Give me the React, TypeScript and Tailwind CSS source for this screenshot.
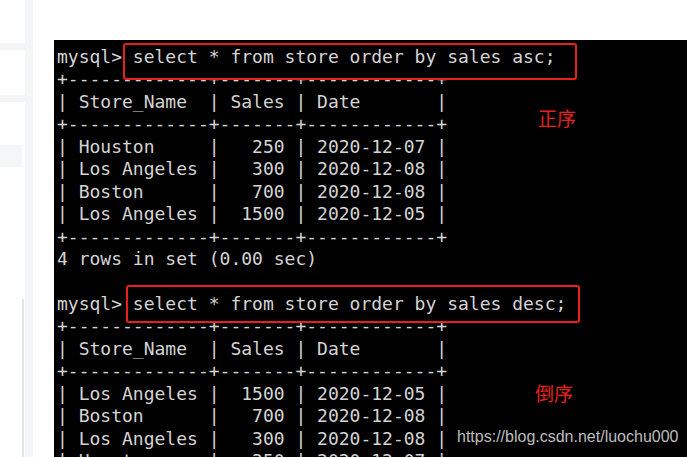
import React from "react";

const lines1 = [
  "mysql> select * from store order by sales asc;",
  "+-------------+-------+------------+",
  "| Store_Name  | Sales | Date       |",
  "+-------------+-------+------------+",
  "| Houston     |   250 | 2020-12-07 |",
  "| Los Angeles |   300 | 2020-12-08 |",
  "| Boston      |   700 | 2020-12-08 |",
  "| Los Angeles |  1500 | 2020-12-05 |",
  "+-------------+-------+------------+",
  "4 rows in set (0.00 sec)",
  " ",
  "mysql> select * from store order by sales desc;",
  "+-------------+-------+------------+",
  "| Store_Name  | Sales | Date       |",
  "+-------------+-------+------------+",
  "| Los Angeles |  1500 | 2020-12-05 |",
  "| Boston      |   700 | 2020-12-08 |",
  "| Los Angeles |   300 | 2020-12-08 |",
  "| Houston     |   250 | 2020-12-07 |",
];

export default function App() {
  return (
    <div className="flex h-[457px] w-[687px] overflow-hidden bg-white">
      <div className="flex w-[25px] shrink-0 flex-col gap-[7px] bg-[#f4f5f7]">
        <div className="h-[43px] bg-white" />
        <div className="h-[45px] bg-white" />
        <div className="flex flex-1 flex-col bg-white pt-[43px]">
          <div className="h-[22px] w-[22px] bg-[#f5f6f8]" />
          <div className="mt-[132px] flex-1 pl-[22px]">
            <div className="h-full w-[2px] bg-[#e2e3e6]" />
          </div>
        </div>
      </div>
      <div className="w-[8px] shrink-0 bg-[#f4f5f7]" />
      <div className="flex-1 pl-[21px] pt-[40px]">
        <div
          className="relative h-full w-full overflow-hidden bg-black pl-[3px] pt-[6px] text-[18px] leading-[22.45px] text-[#d4d4d4]"
          style={{ fontFamily: '"DejaVu Sans Mono", "Liberation Mono", monospace' }}
        >
          <div className="absolute left-[69px] top-[3px] h-[37px] w-[454px] rounded-[3px] border-[2.5px] border-[#e8201c] bg-black" />
          <div className="absolute left-[72px] top-[245px] h-[38px] w-[454px] rounded-[3px] border-[2.5px] border-[#e8201c] bg-black" />
          {lines1.map((l, i) => (
            <div
              key={i}
              className={
                l.startsWith("mysql")
                  ? "relative z-10 whitespace-pre"
                  : "whitespace-pre"
              }
            >
              {l}
            </div>
          ))}
          <div
            className="absolute left-[484px] top-[68px] text-[19px] leading-none text-[#e8201c]"
            style={{ fontFamily: '"Noto Sans CJK SC", sans-serif' }}
          >
            正序
          </div>
          <div
            className="absolute left-[481px] top-[343px] text-[19px] leading-none text-[#e8201c]"
            style={{ fontFamily: '"Noto Sans CJK SC", sans-serif' }}
          >
            倒序
          </div>
          <div
            className="absolute left-[403px] top-[389px] z-20 text-[16px] leading-none text-[#bdbdbd]"
            style={{ fontFamily: '"Liberation Sans", Arial, sans-serif' }}
          >
            https://blog.csdn.net/luochu000
          </div>
        </div>
      </div>
    </div>
  );
}
